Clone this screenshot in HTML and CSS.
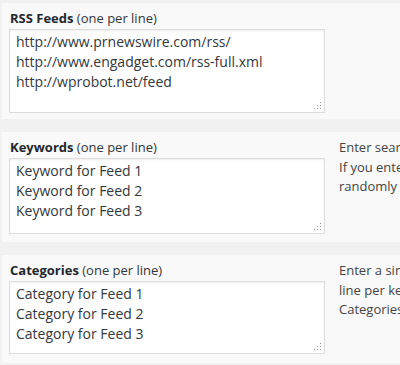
FILE: index.html
```html
<!DOCTYPE html>
<html lang="en">
<head>
  <meta charset="UTF-8">
  <title>RSS Module Settings</title>
  <link rel="stylesheet" href="styles.css">
</head>
<body>
  <div class="settings">
    <div class="row row-rss">
      <div class="field">
        <label class="label"><b>RSS Feeds</b> (one per line)</label>
        <div class="box box-rss">
          <textarea class="input" readonly>http://www.prnewswire.com/rss/
http://www.engadget.com/rss-full.xml
http://wprobot.net/feed</textarea>
          <span class="grip"></span>
        </div>
      </div>
    </div>

    <div class="row row-kw">
      <div class="field">
        <label class="label"><b>Keywords</b> (one per line)</label>
        <div class="box box-kw">
          <textarea class="input" readonly>Keyword for Feed 1
Keyword for Feed 2
Keyword for Feed 3</textarea>
          <span class="grip"></span>
        </div>
      </div>
      <p class="help">Enter search keywords for each feed, one per line.<br>If you enter fewer keywords than feeds they will be used<br>randomly for the remaining feeds.</p>
    </div>

    <div class="row row-cat">
      <div class="field">
        <label class="label"><b>Categories</b> (one per line)</label>
        <div class="box box-cat">
          <textarea class="input" readonly>Category for Feed 1
Category for Feed 2
Category for Feed 3</textarea>
          <span class="grip"></span>
        </div>
      </div>
      <p class="help">Enter a single category for each feed, one<br>line per keyword in the same order.<br>Categories will be created if they do not exist.</p>
    </div>
  </div>
</body>
</html>
```

FILE: styles.css
```css
html, body { margin: 0; padding: 0; }
body { background: #f1f1f1; font-family: "Open Sans", "Noto Sans", sans-serif; color: #444; overflow: hidden; width: 400px; height: 365px; }

.settings { padding: 3px 0 0 2px; }

.row { display: flex; gap: 14px; width: 640px; background: #f9f9f9; padding: 6px 0 6px 7px; margin-bottom: 13px; }
.row-kw { padding-bottom: 8px; }
.row-cat { padding-bottom: 9px; }

.field { display: flex; flex-direction: column; flex: none; }
.label { display: block; font-size: 13px; line-height: 18px; padding-left: 1px; margin-bottom: 2px; color: #32373c; }
.label b { font-weight: 700; color: #23282d; }

.box { position: relative; width: 316px; }
.box-rss { height: 84px; }
.box-kw { height: 76px; }
.box-cat { height: 73px; }

.input {
  display: block; box-sizing: border-box; width: 100%; height: 100%;
  margin: 0; padding: 2px 6px; resize: none; overflow: hidden;
  border: 1px solid #ddd; background: #fff; box-shadow: inset 0 1px 2px rgba(0,0,0,0.07);
  font-family: "Open Sans", "Noto Sans", sans-serif; font-size: 14px; line-height: 20px; color: #32373c;
}
.input:focus { outline: none; }

.grip {
  position: absolute; right: 4px; bottom: 4px; width: 8px; height: 8px;
  background:
    radial-gradient(circle, #999 0.8px, transparent 1px) 0 0 / 3px 3px;
  clip-path: polygon(100% 0, 100% 100%, 0 100%);
}

.help { margin: 0; font-size: 13px; line-height: 19.5px; color: #444; white-space: nowrap; }
```
